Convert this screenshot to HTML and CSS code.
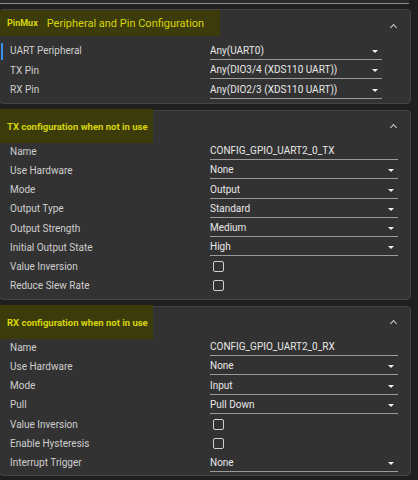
FILE: index.html
```html
<!DOCTYPE html>
<html lang="en">
<head>
  <meta charset="UTF-8" />
  <title>UART2 - Pin Configuration</title>
  <link rel="stylesheet" href="styles.css">
</head>
<body>
  <div class="top-strip"></div>

  <section class="panel panel-pinmux">
    <div class="panel-head">
      <span class="hl hl-pinmux"><b class="tag">PinMux</b> Peripheral and Pin Configuration</span>
      <span class="caret"></span>
    </div>
    <div class="row selected">
      <span class="label">UART Peripheral</span>
      <span class="field select">Any(UART0)</span>
    </div>
    <div class="row">
      <span class="label">TX Pin</span>
      <span class="field select">Any(DIO3/4 (XDS110 UART))</span>
    </div>
    <div class="row">
      <span class="label">RX Pin</span>
      <span class="field select">Any(DIO2/3 (XDS110 UART))</span>
    </div>
  </section>

  <section class="panel">
    <div class="panel-head">
      <span class="hl"><b>TX configuration when not in use</b></span>
      <span class="caret"></span>
    </div>
    <div class="row"><span class="label">Name</span><span class="field">CONFIG_GPIO_UART2_0_TX</span></div>
    <div class="row"><span class="label">Use Hardware</span><span class="field select">None</span></div>
    <div class="row"><span class="label">Mode</span><span class="field select">Output</span></div>
    <div class="row"><span class="label">Output Type</span><span class="field select">Standard</span></div>
    <div class="row"><span class="label">Output Strength</span><span class="field select">Medium</span></div>
    <div class="row"><span class="label">Initial Output State</span><span class="field select">High</span></div>
    <div class="row"><span class="label">Value Inversion</span><span class="check"></span></div>
    <div class="row"><span class="label">Reduce Slew Rate</span><span class="check"></span></div>
  </section>

  <section class="panel">
    <div class="panel-head">
      <span class="hl"><b>RX configuration when not in use</b></span>
      <span class="caret"></span>
    </div>
    <div class="row"><span class="label">Name</span><span class="field">CONFIG_GPIO_UART2_0_RX</span></div>
    <div class="row"><span class="label">Use Hardware</span><span class="field select">None</span></div>
    <div class="row"><span class="label">Mode</span><span class="field select">Input</span></div>
    <div class="row"><span class="label">Pull</span><span class="field select">Pull Down</span></div>
    <div class="row"><span class="label">Value Inversion</span><span class="check"></span></div>
    <div class="row"><span class="label">Enable Hysteresis</span><span class="check"></span></div>
    <div class="row"><span class="label">Interrupt Trigger</span><span class="field select">None</span></div>
  </section>
</body>
</html>
```

FILE: styles.css
```css
body {
  margin: 0;
  font-family: Roboto, "Liberation Sans", sans-serif;
  font-size: 10px;
  background-color: #1f1f1f;
  color: #cfcfcf;
}

.top-strip {
  width: 409px;
  height: 3px;
  background-color: #2a2a2a;
  border-bottom: 1px solid #8c8c8c;
  margin-bottom: 5px;
}

.panel {
  width: 412px;
  margin: 0 0 6px -1px;
  padding: 0 12px 3px 10px;
  box-sizing: border-box;
  background-color: #323232;
  border: 1px solid #444;
  border-radius: 4px;
}

.panel-pinmux {
  padding-right: 28px;
}

.panel-head {
  height: 31px;
  display: flex;
  align-items: center;
  justify-content: space-between;
  position: relative;
}

/* yellow marker over the section titles */
.hl {
  display: flex;
  align-items: center;
  gap: 9px;
  height: 34px;
  width: 146px;
  margin-left: -10px;
  padding-left: 7px;
  background-color: #3c3b0c;
  color: #d6d60a;
  font-size: 9.5px;
  white-space: nowrap;
}

.hl-pinmux {
  height: 26px;
  width: 213px;
  align-self: flex-start;
  font-size: 11px;
}

.hl .tag {
  font-size: 9px;
}

.caret {
  width: 4px;
  height: 4px;
  border-left: 1.5px solid #cfcfcf;
  border-top: 1.5px solid #cfcfcf;
  transform: rotate(45deg);
  margin: 3px 2px 0 0;
}

.panel-pinmux .caret {
  margin-right: -14px;
}

.row {
  height: 19.25px;
  display: flex;
  align-items: center;
  position: relative;
}

.panel-pinmux .row {
  height: 19.5px;
}

.row.selected::before {
  content: "";
  position: absolute;
  left: -9px;
  top: 2px;
  width: 2px;
  height: 17px;
  background-color: #3b8eea;
}

.label {
  width: 200px;
  flex: none;
}

.field {
  flex: 1;
  height: 15px;
  line-height: 14px;
  color: #e8e8e8;
  border-bottom: 1px solid #9a9a9a;
  margin-top: 2px;
  position: relative;
}

.field.select::after {
  content: "";
  position: absolute;
  right: 4px;
  top: 6px;
  border-left: 3.5px solid transparent;
  border-right: 3.5px solid transparent;
  border-top: 3.5px solid #f0f0f0;
}

.check {
  width: 9px;
  height: 9px;
  margin-left: 3px;
  border: 1.5px solid #cfcfcf;
  border-radius: 2px;
}
```
